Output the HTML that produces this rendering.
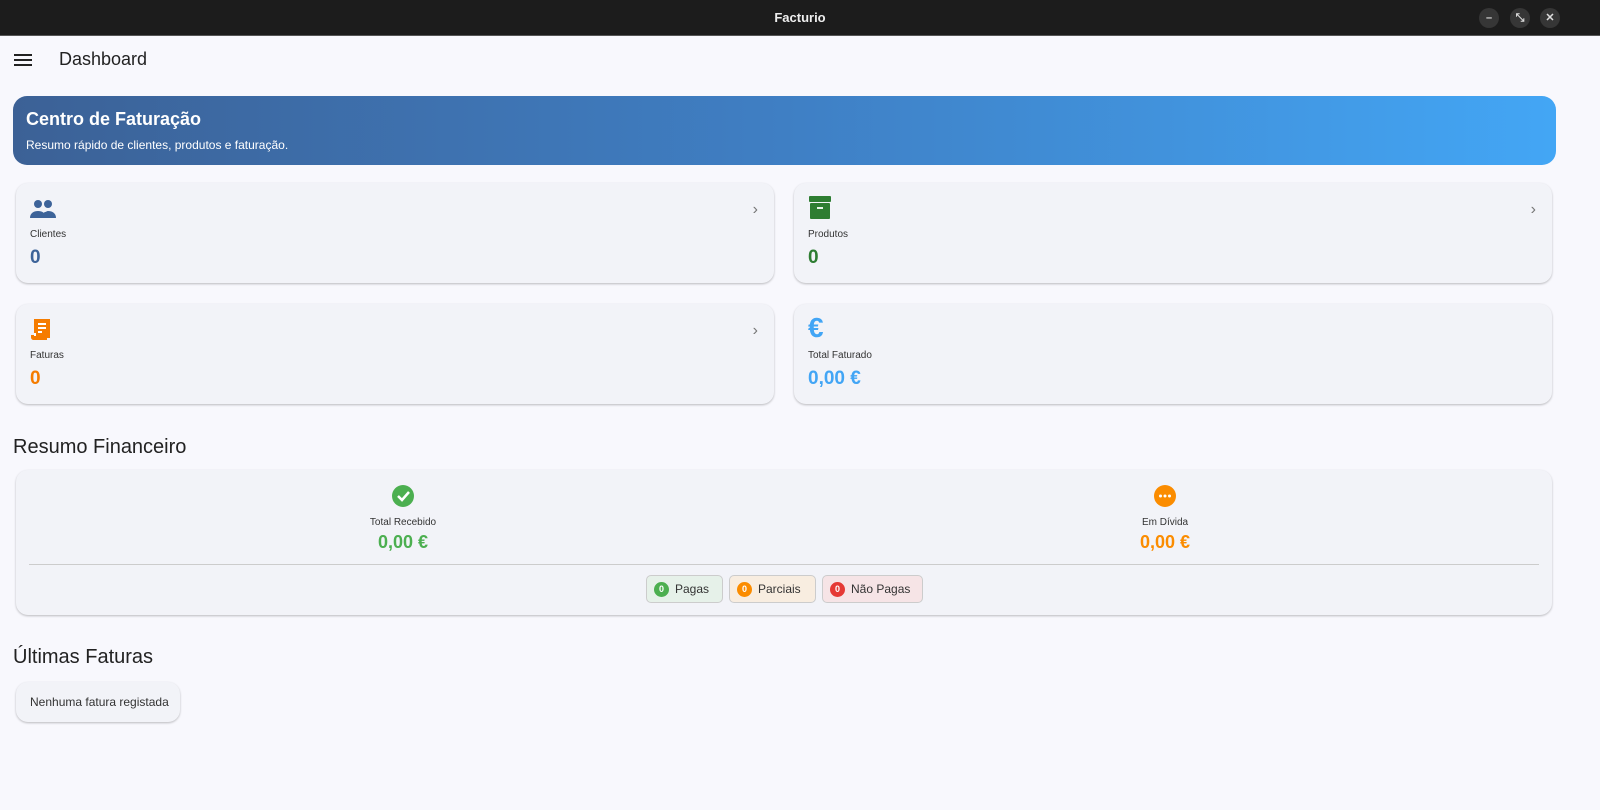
<!DOCTYPE html>
<html><head><meta charset="utf-8"><style>
*{box-sizing:border-box;margin:0;padding:0}
body{width:1600px;height:810px;background:#f8f8fd;font-family:"Liberation Sans",sans-serif;color:#222;position:relative;overflow:hidden}
.tb{position:absolute;left:0;top:0;width:1600px;height:36px;background:#1c1c1c;border-bottom:1px solid #555}
.tb .t{position:absolute;left:0;right:0;top:10px;text-align:center;color:#eee;font-weight:bold;font-size:13px}
.wb{position:absolute;top:8px;width:20px;height:20px;border-radius:50%;background:#363636;color:#ddd;font-size:11px;text-align:center;line-height:20px;font-weight:bold}
.abs{position:absolute}
.banner{left:13px;top:96px;width:1543px;height:69px;border-radius:14px;background:linear-gradient(90deg,#3c6196,#3f7fc4 50%,#43a6f5);color:#fff}
.card{position:absolute;background:#f2f3f8;border-radius:12px;box-shadow:0 1px 2px rgba(0,0,0,.25)}
.lbl{font-size:10px;color:#333}
.val{font-size:19px;font-weight:bold}
.chev{position:absolute;right:16px;top:18px;color:#777;font-size:16px}
.chip{position:absolute;top:575px;height:28px;border-radius:5px;border:1px solid #ccc;font-size:12px;line-height:26px;padding-left:28px;color:#333}
.chip i{position:absolute;left:7px;top:6px;width:15px;height:15px;border-radius:50%;color:#fff;font-style:normal;font-size:9px;font-weight:bold;line-height:15px;text-align:center}
h2{position:absolute;font-weight:normal;font-size:20px;color:#222}
</style></head><body>
<div class="tb"><div class="t">Facturio</div>
<div class="wb" style="left:1479px">–</div><div class="wb" style="left:1510px">⤡</div><div class="wb" style="left:1540px">✕</div></div>
<svg class="abs" style="left:14px;top:53px" width="18" height="14"><rect y="1" width="18" height="2" fill="#222"/><rect y="6" width="18" height="2" fill="#222"/><rect y="11" width="18" height="2" fill="#222"/></svg>
<div class="abs" style="left:59px;top:49px;font-size:18px;color:#222">Dashboard</div>
<div class="abs banner"><div style="position:absolute;left:13px;top:13px;font-size:18px;font-weight:bold">Centro de Faturação</div><div style="position:absolute;left:13px;top:42px;font-size:12px">Resumo rápido de clientes, produtos e faturação.</div></div>

<div class="card" style="left:16px;top:183px;width:758px;height:100px">
<svg class="abs" style="left:14px;top:16px" width="26" height="20" viewBox="0 0 26 20"><circle cx="8" cy="5" r="4" fill="#3d6399"/><circle cx="18" cy="5" r="4" fill="#3d6399"/><path d="M0 19c0-5 4-7 8-7s8 2 8 7z M12 19c0-3 1-5 3-6 1 0 2-1 3-1 4 0 8 2 8 7z" fill="#3d6399"/></svg>
<div class="abs lbl" style="left:14px;top:46px">Clientes</div><div class="abs val" style="left:14px;top:64px;color:#3d6399">0</div><div class="chev">›</div></div>

<div class="card" style="left:794px;top:183px;width:758px;height:100px">
<svg class="abs" style="left:15px;top:13px" width="22" height="23" viewBox="0 0 22 23"><rect x="0" y="0" width="22" height="6" rx="1" fill="#2e7d32"/><rect x="1" y="7" width="20" height="16" rx="1" fill="#2e7d32"/><rect x="8" y="11" width="6" height="2" fill="#e8f5e9"/></svg>
<div class="abs lbl" style="left:14px;top:46px">Produtos</div><div class="abs val" style="left:14px;top:64px;color:#2e7d32">0</div><div class="chev">›</div></div>

<div class="card" style="left:16px;top:304px;width:758px;height:100px">
<svg class="abs" style="left:14px;top:14px" width="22" height="24" viewBox="0 0 22 24"><rect x="4" y="1" width="16" height="19" fill="#f57c00"/><rect x="8" y="5" width="8" height="2" fill="#fff"/><rect x="8" y="9" width="8" height="2" fill="#fff"/><rect x="8" y="13" width="4" height="2" fill="#fff"/><path d="M1 17h16v5H4c-2 0-3-1-3-3z" fill="#f57c00"/><rect x="4" y="15" width="2" height="3" fill="#fff"/></svg>
<div class="abs lbl" style="left:14px;top:46px">Faturas</div><div class="abs val" style="left:14px;top:64px;color:#f57c00">0</div><div class="chev">›</div></div>

<div class="card" style="left:794px;top:304px;width:758px;height:100px">
<div class="abs" style="left:14px;top:8px;font-size:28px;color:#42a5f5;font-weight:bold">€</div>
<div class="abs lbl" style="left:14px;top:46px">Total Faturado</div><div class="abs val" style="left:14px;top:64px;color:#42a5f5">0,00 €</div></div>

<h2 style="left:13px;top:436px">Resumo Financeiro</h2>
<div class="card" style="left:16px;top:470px;width:1536px;height:145px">
<svg class="abs" style="left:376px;top:15px" width="22" height="22"><circle cx="11" cy="11" r="11" fill="#4caf50"/><path d="M6 11l4 4 7-8" stroke="#fff" stroke-width="2.5" fill="none"/></svg>
<div class="abs lbl" style="left:336px;top:47px;width:102px;text-align:center">Total Recebido</div>
<div class="abs val" style="left:336px;top:62px;width:102px;text-align:center;color:#4caf50;font-size:18px">0,00 €</div>
<svg class="abs" style="left:1138px;top:15px" width="22" height="22"><circle cx="11" cy="11" r="11" fill="#fb8c00"/><circle cx="6.5" cy="11" r="1.5" fill="#fff"/><circle cx="11" cy="11" r="1.5" fill="#fff"/><circle cx="15.5" cy="11" r="1.5" fill="#fff"/></svg>
<div class="abs lbl" style="left:1098px;top:47px;width:102px;text-align:center">Em Dívida</div>
<div class="abs val" style="left:1098px;top:62px;width:102px;text-align:center;color:#fb8c00;font-size:18px">0,00 €</div>
<div class="abs" style="left:13px;top:94px;width:1510px;height:1px;background:#ccc"></div>
</div>
<div class="chip" style="left:646px;width:77px;background:#e6f1e9"><i style="background:#4caf50">0</i>Pagas</div>
<div class="chip" style="left:729px;width:87px;background:#f8ede0"><i style="background:#fb8c00">0</i>Parciais</div>
<div class="chip" style="left:822px;width:101px;background:#f6e4e6"><i style="background:#e53935">0</i>Não Pagas</div>

<h2 style="left:13px;top:646px">Últimas Faturas</h2>
<div class="card" style="left:16px;top:682px;width:164px;height:40px"><div class="abs" style="left:14px;top:13px;font-size:12px;color:#333">Nenhuma fatura registada</div></div>
</body></html>
